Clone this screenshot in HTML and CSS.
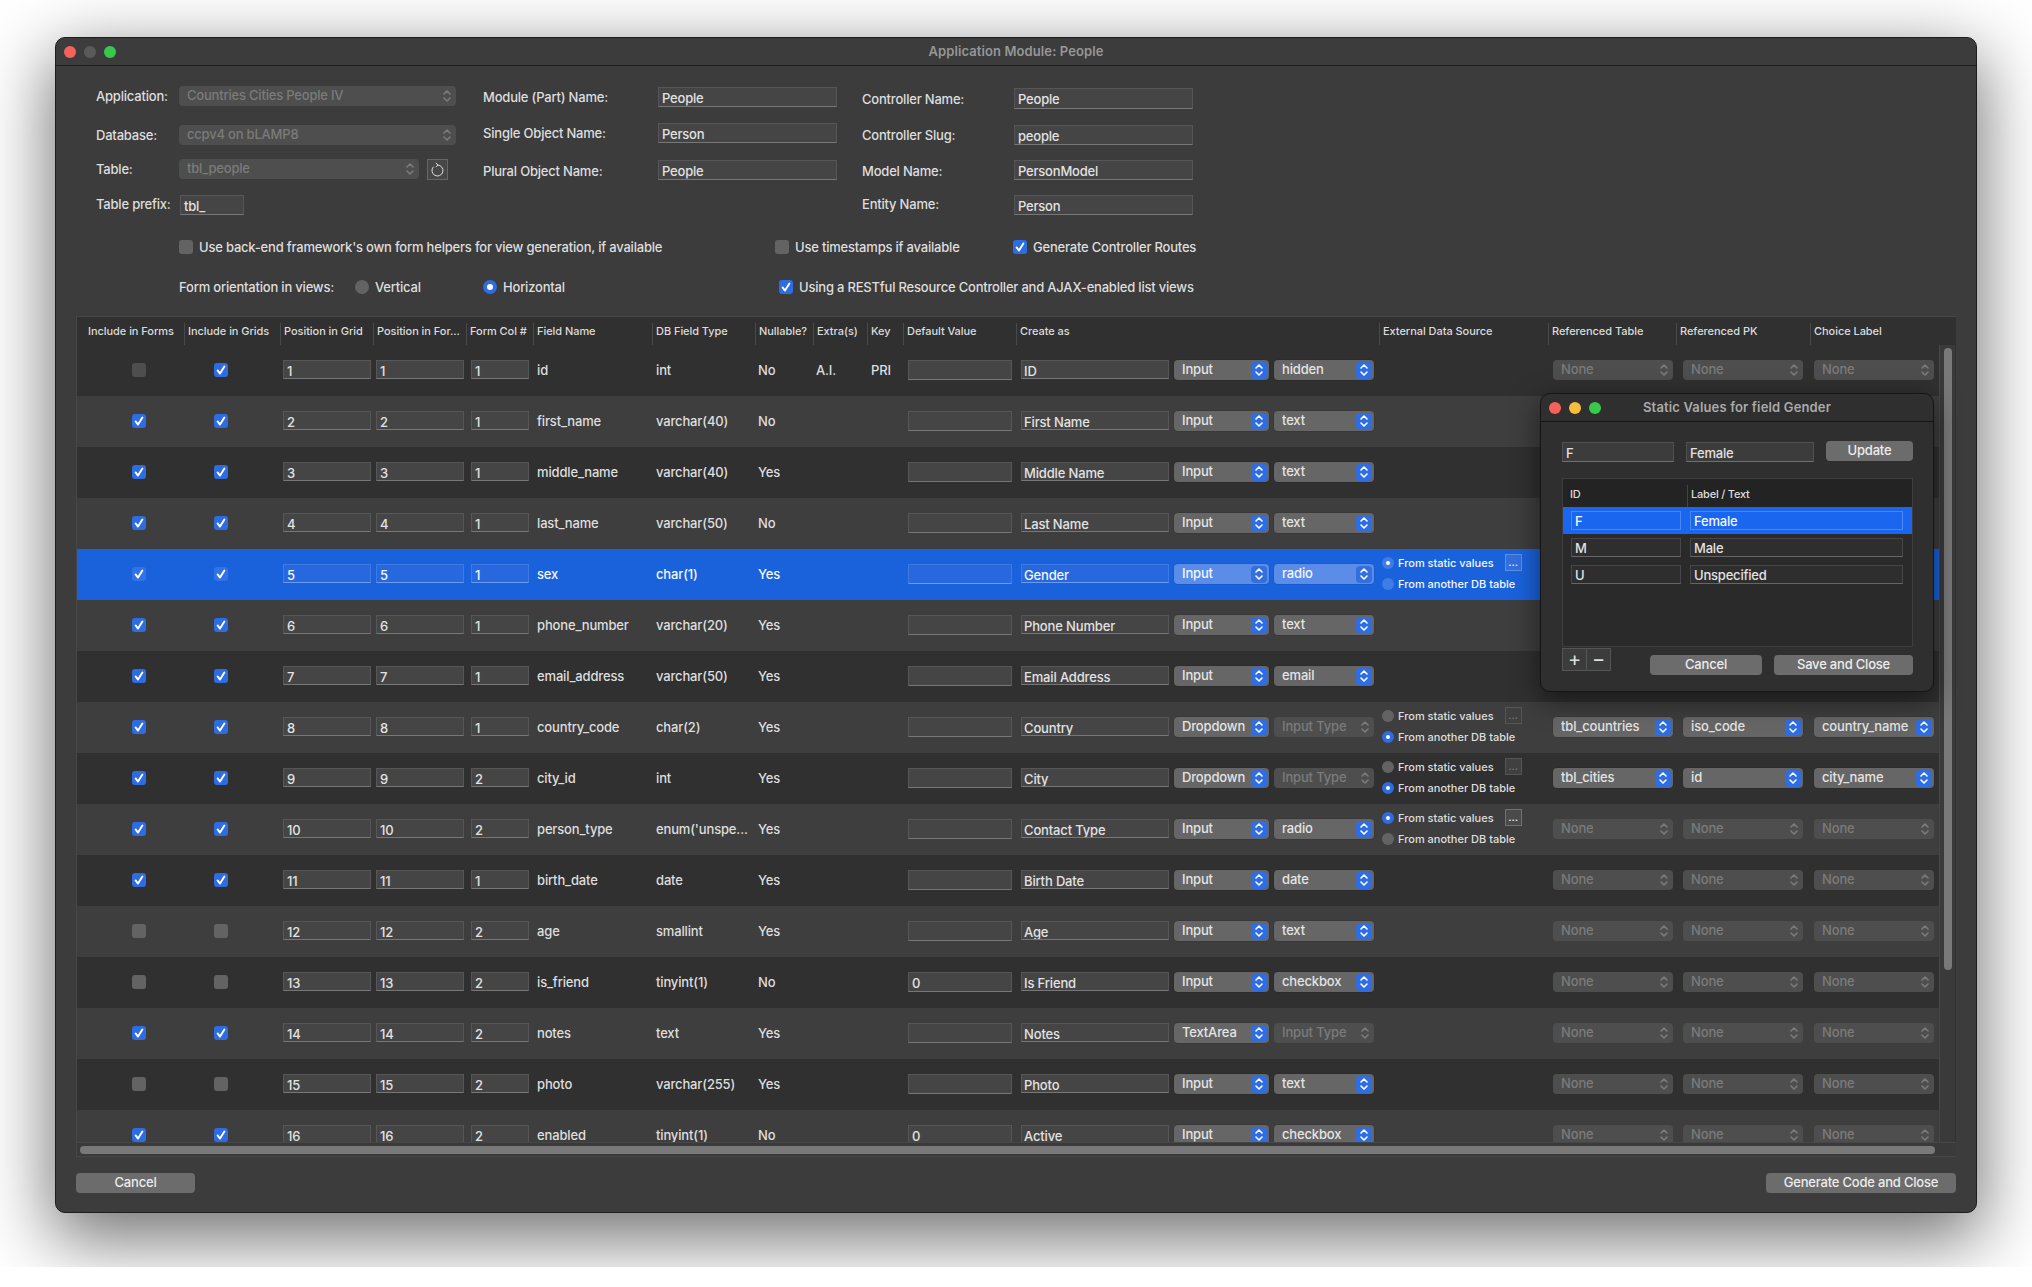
FILE: index.html
```html
<!DOCTYPE html>
<html lang="en">
<head>
  <meta charset="UTF-8" />
  <title>Application Module: People</title>
  <link rel="stylesheet" href="styles.css">
</head>
<body>
  <svg class="defs" width="0" height="0">
    <symbol id="ud" viewBox="0 0 10 16"><path d="M2 6 L5 3 L8 6 M2 10 L5 13 L8 10" fill="none" stroke="currentColor" stroke-width="1.6" stroke-linecap="round" stroke-linejoin="round"/></symbol>
    <symbol id="tick" viewBox="0 0 14 14"><path d="M3.6 7.4 L6 10.6 L10.4 3.6" fill="none" stroke="#fff" stroke-width="1.9" stroke-linecap="round" stroke-linejoin="round"/></symbol>
  </svg>

  <div class="desk">
  <div class="window">
    <div class="titlebar">
      <span class="lights"><i class="red"></i><i class="off"></i><i class="green"></i></span>
      Application Module: People
    </div>

    <div class="content">
      <div class="form-head">
        <div class="col col-app">
          <div class="fld"><label>Application:</label><div class="sel dis wide"><span>Countries Cities People IV</span><svg class="ud"><use href="#ud"/></svg></div></div>
          <div class="fld"><label>Database:</label><div class="sel dis wide"><span>ccpv4 on bLAMP8</span><svg class="ud"><use href="#ud"/></svg></div></div>
          <div class="fld"><label>Table:</label><div class="sel dis table-sel"><span>tbl_people</span><svg class="ud"><use href="#ud"/></svg></div>
            <div class="refresh"><svg width="13" height="15" viewBox="0 0 13 15"><path d="M6.5 3 A5.5 5.5 0 1 1 2.4 4.8" fill="none" stroke="#ddd" stroke-width="1"/><path d="M4.8 0.8 L7 3 L4.8 5" fill="none" stroke="#ddd" stroke-width="1"/></svg></div>
          </div>
          <div class="fld"><label>Table prefix:</label><div class="input prefix">tbl_</div></div>
        </div>
        <div class="col col-mod">
          <div class="fld"><label>Module (Part) Name:</label><div class="input">People</div></div>
          <div class="fld"><label>Single Object Name:</label><div class="input">Person</div></div>
          <div class="fld"><label>Plural Object Name:</label><div class="input">People</div></div>
        </div>
        <div class="col col-ctl">
          <div class="fld"><label>Controller Name:</label><div class="input">People</div></div>
          <div class="fld"><label>Controller Slug:</label><div class="input">people</div></div>
          <div class="fld"><label>Model Name:</label><div class="input">PersonModel</div></div>
          <div class="fld"><label>Entity Name:</label><div class="input">Person</div></div>
        </div>
      </div>

      <div class="opts opts-a">
        <div class="opt"><b class="cb"></b>Use back-end framework's own form helpers for view generation, if available</div>
        <div class="opt"><b class="cb"></b>Use timestamps if available</div>
        <div class="opt"><b class="cb on"><svg><use href="#tick"/></svg></b>Generate Controller Routes</div>
      </div>
      <div class="opts opts-b">
        <div class="opt">Form orientation in views:</div>
        <div class="opt"><b class="rd"></b>Vertical</div>
        <div class="opt"><b class="rd on"></b>Horizontal</div>
        <div class="opt"><b class="cb on"><svg><use href="#tick"/></svg></b>Using a RESTful Resource Controller and AJAX-enabled list views</div>
      </div>

      <div class="grid">
        <div class="thead">
          <div>Include in Forms</div><div>Include in Grids</div><div>Position in Grid</div><div>Position in For...</div><div>Form Col #</div><div>Field Name</div><div>DB Field Type</div><div>Nullable?</div><div>Extra(s)</div><div>Key</div><div>Default Value</div><div>Create as</div><div>External Data Source</div><div>Referenced Table</div><div>Referenced PK</div><div>Choice Label</div>
        </div>
        <div class="tbody">
          <div class="rows">

            <div class="row">
              <div><b class="cb dim"></b></div><div><b class="cb on"><svg><use href="#tick"/></svg></b></div>
              <div><div class="input">1</div></div><div><div class="input">1</div></div><div><div class="input">1</div></div>
              <div>id</div><div>int</div><div>No</div><div>A.I.</div><div>PRI</div>
              <div><div class="input"></div></div>
              <div class="create"><div class="input">ID</div><div class="sel"><span>Input</span><i><svg class="ud"><use href="#ud"/></svg></i></div><div class="sel"><span>hidden</span><i><svg class="ud"><use href="#ud"/></svg></i></div></div>
              <div></div>
              <div><div class="sel dis"><span>None</span><svg class="ud"><use href="#ud"/></svg></div></div><div><div class="sel dis"><span>None</span><svg class="ud"><use href="#ud"/></svg></div></div><div><div class="sel dis"><span>None</span><svg class="ud"><use href="#ud"/></svg></div></div>
            </div>

            <div class="row">
              <div><b class="cb on"><svg><use href="#tick"/></svg></b></div><div><b class="cb on"><svg><use href="#tick"/></svg></b></div>
              <div><div class="input">2</div></div><div><div class="input">2</div></div><div><div class="input">1</div></div>
              <div>first_name</div><div>varchar(40)</div><div>No</div><div></div><div></div>
              <div><div class="input"></div></div>
              <div class="create"><div class="input">First Name</div><div class="sel"><span>Input</span><i><svg class="ud"><use href="#ud"/></svg></i></div><div class="sel"><span>text</span><i><svg class="ud"><use href="#ud"/></svg></i></div></div>
              <div></div><div></div><div></div><div></div>
            </div>

            <div class="row">
              <div><b class="cb on"><svg><use href="#tick"/></svg></b></div><div><b class="cb on"><svg><use href="#tick"/></svg></b></div>
              <div><div class="input">3</div></div><div><div class="input">3</div></div><div><div class="input">1</div></div>
              <div>middle_name</div><div>varchar(40)</div><div>Yes</div><div></div><div></div>
              <div><div class="input"></div></div>
              <div class="create"><div class="input">Middle Name</div><div class="sel"><span>Input</span><i><svg class="ud"><use href="#ud"/></svg></i></div><div class="sel"><span>text</span><i><svg class="ud"><use href="#ud"/></svg></i></div></div>
              <div></div><div></div><div></div><div></div>
            </div>

            <div class="row">
              <div><b class="cb on"><svg><use href="#tick"/></svg></b></div><div><b class="cb on"><svg><use href="#tick"/></svg></b></div>
              <div><div class="input">4</div></div><div><div class="input">4</div></div><div><div class="input">1</div></div>
              <div>last_name</div><div>varchar(50)</div><div>No</div><div></div><div></div>
              <div><div class="input"></div></div>
              <div class="create"><div class="input">Last Name</div><div class="sel"><span>Input</span><i><svg class="ud"><use href="#ud"/></svg></i></div><div class="sel"><span>text</span><i><svg class="ud"><use href="#ud"/></svg></i></div></div>
              <div></div><div></div><div></div><div></div>
            </div>

            <div class="row selected">
              <div><b class="cb on"><svg><use href="#tick"/></svg></b></div><div><b class="cb on"><svg><use href="#tick"/></svg></b></div>
              <div><div class="input">5</div></div><div><div class="input">5</div></div><div><div class="input">1</div></div>
              <div>sex</div><div>char(1)</div><div>Yes</div><div></div><div></div>
              <div><div class="input"></div></div>
              <div class="create"><div class="input">Gender</div><div class="sel"><span>Input</span><i><svg class="ud"><use href="#ud"/></svg></i></div><div class="sel"><span>radio</span><i><svg class="ud"><use href="#ud"/></svg></i></div></div>
              <div class="source"><div class="src-line"><b class="rd small on"></b>From static values<u class="dots">...</u></div><div class="src-line"><b class="rd small"></b>From another DB table</div></div>
              <div></div><div></div><div></div>
            </div>

            <div class="row">
              <div><b class="cb on"><svg><use href="#tick"/></svg></b></div><div><b class="cb on"><svg><use href="#tick"/></svg></b></div>
              <div><div class="input">6</div></div><div><div class="input">6</div></div><div><div class="input">1</div></div>
              <div>phone_number</div><div>varchar(20)</div><div>Yes</div><div></div><div></div>
              <div><div class="input"></div></div>
              <div class="create"><div class="input">Phone Number</div><div class="sel"><span>Input</span><i><svg class="ud"><use href="#ud"/></svg></i></div><div class="sel"><span>text</span><i><svg class="ud"><use href="#ud"/></svg></i></div></div>
              <div></div><div></div><div></div><div></div>
            </div>

            <div class="row">
              <div><b class="cb on"><svg><use href="#tick"/></svg></b></div><div><b class="cb on"><svg><use href="#tick"/></svg></b></div>
              <div><div class="input">7</div></div><div><div class="input">7</div></div><div><div class="input">1</div></div>
              <div>email_address</div><div>varchar(50)</div><div>Yes</div><div></div><div></div>
              <div><div class="input"></div></div>
              <div class="create"><div class="input">Email Address</div><div class="sel"><span>Input</span><i><svg class="ud"><use href="#ud"/></svg></i></div><div class="sel"><span>email</span><i><svg class="ud"><use href="#ud"/></svg></i></div></div>
              <div></div><div></div><div></div><div></div>
            </div>

            <div class="row">
              <div><b class="cb on"><svg><use href="#tick"/></svg></b></div><div><b class="cb on"><svg><use href="#tick"/></svg></b></div>
              <div><div class="input">8</div></div><div><div class="input">8</div></div><div><div class="input">1</div></div>
              <div>country_code</div><div>char(2)</div><div>Yes</div><div></div><div></div>
              <div><div class="input"></div></div>
              <div class="create"><div class="input">Country</div><div class="sel"><span>Dropdown</span><i><svg class="ud"><use href="#ud"/></svg></i></div><div class="sel dis"><span>Input Type</span><svg class="ud"><use href="#ud"/></svg></div></div>
              <div class="source"><div class="src-line"><b class="rd small"></b>From static values<u class="dots dim">...</u></div><div class="src-line"><b class="rd small on"></b>From another DB table</div></div>
              <div><div class="sel ref"><span>tbl_countries</span><i><svg class="ud"><use href="#ud"/></svg></i></div></div><div><div class="sel ref"><span>iso_code</span><i><svg class="ud"><use href="#ud"/></svg></i></div></div><div><div class="sel ref"><span>country_name</span><i><svg class="ud"><use href="#ud"/></svg></i></div></div>
            </div>

            <div class="row">
              <div><b class="cb on"><svg><use href="#tick"/></svg></b></div><div><b class="cb on"><svg><use href="#tick"/></svg></b></div>
              <div><div class="input">9</div></div><div><div class="input">9</div></div><div><div class="input">2</div></div>
              <div>city_id</div><div>int</div><div>Yes</div><div></div><div></div>
              <div><div class="input"></div></div>
              <div class="create"><div class="input">City</div><div class="sel"><span>Dropdown</span><i><svg class="ud"><use href="#ud"/></svg></i></div><div class="sel dis"><span>Input Type</span><svg class="ud"><use href="#ud"/></svg></div></div>
              <div class="source"><div class="src-line"><b class="rd small"></b>From static values<u class="dots dim">...</u></div><div class="src-line"><b class="rd small on"></b>From another DB table</div></div>
              <div><div class="sel ref"><span>tbl_cities</span><i><svg class="ud"><use href="#ud"/></svg></i></div></div><div><div class="sel ref"><span>id</span><i><svg class="ud"><use href="#ud"/></svg></i></div></div><div><div class="sel ref"><span>city_name</span><i><svg class="ud"><use href="#ud"/></svg></i></div></div>
            </div>

            <div class="row">
              <div><b class="cb on"><svg><use href="#tick"/></svg></b></div><div><b class="cb on"><svg><use href="#tick"/></svg></b></div>
              <div><div class="input">10</div></div><div><div class="input">10</div></div><div><div class="input">2</div></div>
              <div>person_type</div><div>enum('unspe...</div><div>Yes</div><div></div><div></div>
              <div><div class="input"></div></div>
              <div class="create"><div class="input">Contact Type</div><div class="sel"><span>Input</span><i><svg class="ud"><use href="#ud"/></svg></i></div><div class="sel"><span>radio</span><i><svg class="ud"><use href="#ud"/></svg></i></div></div>
              <div class="source"><div class="src-line"><b class="rd small on"></b>From static values<u class="dots">...</u></div><div class="src-line"><b class="rd small"></b>From another DB table</div></div>
              <div><div class="sel dis ref"><span>None</span><svg class="ud"><use href="#ud"/></svg></div></div><div><div class="sel dis ref"><span>None</span><svg class="ud"><use href="#ud"/></svg></div></div><div><div class="sel dis ref"><span>None</span><svg class="ud"><use href="#ud"/></svg></div></div>
            </div>

            <div class="row">
              <div><b class="cb on"><svg><use href="#tick"/></svg></b></div><div><b class="cb on"><svg><use href="#tick"/></svg></b></div>
              <div><div class="input">11</div></div><div><div class="input">11</div></div><div><div class="input">1</div></div>
              <div>birth_date</div><div>date</div><div>Yes</div><div></div><div></div>
              <div><div class="input"></div></div>
              <div class="create"><div class="input">Birth Date</div><div class="sel"><span>Input</span><i><svg class="ud"><use href="#ud"/></svg></i></div><div class="sel"><span>date</span><i><svg class="ud"><use href="#ud"/></svg></i></div></div>
              <div></div>
              <div><div class="sel dis ref"><span>None</span><svg class="ud"><use href="#ud"/></svg></div></div><div><div class="sel dis ref"><span>None</span><svg class="ud"><use href="#ud"/></svg></div></div><div><div class="sel dis ref"><span>None</span><svg class="ud"><use href="#ud"/></svg></div></div>
            </div>

            <div class="row">
              <div><b class="cb"></b></div><div><b class="cb"></b></div>
              <div><div class="input">12</div></div><div><div class="input">12</div></div><div><div class="input">2</div></div>
              <div>age</div><div>smallint</div><div>Yes</div><div></div><div></div>
              <div><div class="input"></div></div>
              <div class="create"><div class="input">Age</div><div class="sel"><span>Input</span><i><svg class="ud"><use href="#ud"/></svg></i></div><div class="sel"><span>text</span><i><svg class="ud"><use href="#ud"/></svg></i></div></div>
              <div></div>
              <div><div class="sel dis ref"><span>None</span><svg class="ud"><use href="#ud"/></svg></div></div><div><div class="sel dis ref"><span>None</span><svg class="ud"><use href="#ud"/></svg></div></div><div><div class="sel dis ref"><span>None</span><svg class="ud"><use href="#ud"/></svg></div></div>
            </div>

            <div class="row">
              <div><b class="cb"></b></div><div><b class="cb"></b></div>
              <div><div class="input">13</div></div><div><div class="input">13</div></div><div><div class="input">2</div></div>
              <div>is_friend</div><div>tinyint(1)</div><div>No</div><div></div><div></div>
              <div><div class="input">0</div></div>
              <div class="create"><div class="input">Is Friend</div><div class="sel"><span>Input</span><i><svg class="ud"><use href="#ud"/></svg></i></div><div class="sel"><span>checkbox</span><i><svg class="ud"><use href="#ud"/></svg></i></div></div>
              <div></div>
              <div><div class="sel dis ref"><span>None</span><svg class="ud"><use href="#ud"/></svg></div></div><div><div class="sel dis ref"><span>None</span><svg class="ud"><use href="#ud"/></svg></div></div><div><div class="sel dis ref"><span>None</span><svg class="ud"><use href="#ud"/></svg></div></div>
            </div>

            <div class="row">
              <div><b class="cb on"><svg><use href="#tick"/></svg></b></div><div><b class="cb on"><svg><use href="#tick"/></svg></b></div>
              <div><div class="input">14</div></div><div><div class="input">14</div></div><div><div class="input">2</div></div>
              <div>notes</div><div>text</div><div>Yes</div><div></div><div></div>
              <div><div class="input"></div></div>
              <div class="create"><div class="input">Notes</div><div class="sel"><span>TextArea</span><i><svg class="ud"><use href="#ud"/></svg></i></div><div class="sel dis"><span>Input Type</span><svg class="ud"><use href="#ud"/></svg></div></div>
              <div></div>
              <div><div class="sel dis ref"><span>None</span><svg class="ud"><use href="#ud"/></svg></div></div><div><div class="sel dis ref"><span>None</span><svg class="ud"><use href="#ud"/></svg></div></div><div><div class="sel dis ref"><span>None</span><svg class="ud"><use href="#ud"/></svg></div></div>
            </div>

            <div class="row">
              <div><b class="cb"></b></div><div><b class="cb"></b></div>
              <div><div class="input">15</div></div><div><div class="input">15</div></div><div><div class="input">2</div></div>
              <div>photo</div><div>varchar(255)</div><div>Yes</div><div></div><div></div>
              <div><div class="input"></div></div>
              <div class="create"><div class="input">Photo</div><div class="sel"><span>Input</span><i><svg class="ud"><use href="#ud"/></svg></i></div><div class="sel"><span>text</span><i><svg class="ud"><use href="#ud"/></svg></i></div></div>
              <div></div>
              <div><div class="sel dis ref"><span>None</span><svg class="ud"><use href="#ud"/></svg></div></div><div><div class="sel dis ref"><span>None</span><svg class="ud"><use href="#ud"/></svg></div></div><div><div class="sel dis ref"><span>None</span><svg class="ud"><use href="#ud"/></svg></div></div>
            </div>

            <div class="row">
              <div><b class="cb on"><svg><use href="#tick"/></svg></b></div><div><b class="cb on"><svg><use href="#tick"/></svg></b></div>
              <div><div class="input">16</div></div><div><div class="input">16</div></div><div><div class="input">2</div></div>
              <div>enabled</div><div>tinyint(1)</div><div>No</div><div></div><div></div>
              <div><div class="input">0</div></div>
              <div class="create"><div class="input">Active</div><div class="sel"><span>Input</span><i><svg class="ud"><use href="#ud"/></svg></i></div><div class="sel"><span>checkbox</span><i><svg class="ud"><use href="#ud"/></svg></i></div></div>
              <div></div>
              <div><div class="sel dis ref"><span>None</span><svg class="ud"><use href="#ud"/></svg></div></div><div><div class="sel dis ref"><span>None</span><svg class="ud"><use href="#ud"/></svg></div></div><div><div class="sel dis ref"><span>None</span><svg class="ud"><use href="#ud"/></svg></div></div>
            </div>

          </div>
          <div class="vscroll"><div class="thumb"></div></div>
        </div>
        <div class="hscroll"><div class="thumb"></div></div>
      </div>

      <div class="footer">
        <div class="btn cancel">Cancel</div>
        <div class="btn generate">Generate Code and Close</div>
      </div>
    </div>

    <!-- floating sheet over the grid -->
    <div class="dialog">
      <div class="titlebar dlg-title">
        <span class="lights"><i class="red"></i><i class="yellow"></i><i class="green"></i></span>
        Static Values for field Gender
      </div>
      <div class="dlg-body">
        <div class="dlg-top">
          <div class="input key">F</div>
          <div class="input val">Female</div>
          <div class="btn update">Update</div>
        </div>
        <div class="values">
          <div class="values-head"><div>ID</div><div>Label / Text</div></div>
          <div class="values-row selected"><div class="input">F</div><div class="input">Female</div></div>
          <div class="values-row"><div class="input">M</div><div class="input">Male</div></div>
          <div class="values-row"><div class="input">U</div><div class="input">Unspecified</div></div>
        </div>
        <div class="dlg-foot">
          <div class="plusminus"><span>+</span><span>&minus;</span></div>
          <div class="btn dlg-cancel">Cancel</div>
          <div class="btn save">Save and Close</div>
        </div>
      </div>
    </div>
  </div>
  </div>
</body>
</html>
```

FILE: styles.css
```css
* { box-sizing: border-box; }

body {
  margin: 0;
  background: #fff;
  font-family: "Inter", "Liberation Sans", sans-serif;
  font-size: 13px;
  font-weight: 500;
  letter-spacing: -0.2px;
  color: #dedede;
}

.defs { position: absolute; }

/* the screenshot crops the window shadow just under the window */
.desk { height: 1267px; padding: 37px 0 0 55px; overflow: hidden; }

.window {
  position: relative;
  width: 1922px;
  height: 1176px;
  background: #3c3c3c;
  border: 1px solid #1d1d1d;
  border-radius: 10px;
  box-shadow: 0 22px 70px 4px rgba(0, 0, 0, 0.56);
}

.titlebar {
  position: relative;
  height: 28px;
  line-height: 26px;
  text-align: center;
  font-weight: 600;
  font-size: 13px;
  letter-spacing: 0.1px;
  color: #979797;
  border-bottom: 1px solid #1e1e1e;
  border-radius: 9px 9px 0 0;
}

.lights {
  position: absolute;
  left: 8px;
  top: 8px;
  display: flex;
  gap: 8px;
}
.lights i { width: 12px; height: 12px; border-radius: 50%; }
.lights .red { background: #f6615b; }
.lights .off { background: #5a5a5a; }
.lights .yellow { background: #f6bd3b; }
.lights .green { background: #39c94a; }

.content { padding: 0 20px; }

/* top form */
.form-head { display: flex; height: 149px; }
.col { display: flex; flex-direction: column; }
.col-app { margin: 20px 0 0 20px; width: 387px; }
.col-mod { margin-top: 21px; width: 379px; }
.col-ctl { margin-top: 22px; }

.fld { display: flex; align-items: center; height: 20px; }
.fld label { flex: none; }
.col-app label { width: 83px; margin-bottom: 1px; }
.col-mod label { width: 175px; }
.col-ctl label { width: 152px; }
.col-mod .fld:nth-child(3) label,
.col-ctl .fld:nth-child(3) label { margin-top: 2px; }
.col-ctl .fld:nth-child(4) label,
.col-app .fld:nth-child(4) label { margin-bottom: 2px; }
.col-app .fld:nth-child(2) { margin-top: 19px; }
.col-app .fld:nth-child(3) { margin-top: 14px; }
.col-app .fld:nth-child(4) { margin-top: 16px; }
.col-mod .fld:nth-child(2) { margin-top: 16px; }
.col-mod .fld:nth-child(3) { margin-top: 17px; }
.col-ctl .fld:nth-child(1) { height: 21px; }
.col-ctl .fld:nth-child(2) { margin-top: 16px; }
.col-ctl .fld:nth-child(3),
.col-ctl .fld:nth-child(4) { margin-top: 15px; }
.col-ctl .fld:nth-child(1) .input { height: 21px; }

.input {
  flex: none;
  width: 179px;
  height: 20px;
  padding: 2px 3px 0;
  line-height: 17px;
  background: #454545;
  border: 1px solid #565656;
  border-bottom-color: #777;
  white-space: nowrap;
  overflow: hidden;
  color: #e2e2e2;
}
.prefix { width: 64px; margin-left: 1px; }

.sel {
  display: flex;
  align-items: center;
  height: 20px;
  padding-left: 8px;
  border-radius: 4px;
  background: #666;
  color: #e4e4e4;
  box-shadow: 0 0 0 0.5px rgba(0, 0, 0, 0.15);
}
.sel span { flex: 1; padding-bottom: 2px; white-space: nowrap; overflow: hidden; }
.sel i {
  display: flex;
  align-items: center;
  justify-content: center;
  flex: none;
  width: 16px;
  height: 17px;
  margin-right: 2px;
  border-radius: 4px;
  background: #2f6de2;
  color: #fff;
}
.ud { display: block; width: 10px; height: 16px; }
.sel.dis { background: #4e4e4e; color: #7b7b7b; box-shadow: none; padding-right: 4px; }
.sel.wide { width: 277px; }
.sel.table-sel { width: 240px; }

.refresh {
  display: flex;
  align-items: center;
  justify-content: center;
  width: 21px;
  height: 21px;
  margin-left: 8px;
  background: #474747;
  border: 1px solid #666;
}

.cb {
  display: inline-block;
  flex: none;
  width: 14px;
  height: 14px;
  border-radius: 3px;
  background: #636363;
  vertical-align: top;
}
.cb.dim { background: #4e4e4e; }
.cb.on { background: #2d6ce3; }
.cb svg { display: block; width: 14px; height: 14px; }

.rd {
  display: inline-block;
  flex: none;
  width: 14px;
  height: 14px;
  border-radius: 50%;
  background: #636363;
}
.rd.on { background: #fff; border: 4.5px solid #2d6ce3; }
.rd.small { width: 12px; height: 12px; }
.rd.small.on { border-width: 4px; }

.opts { display: flex; align-items: center; height: 14px; margin-left: 103px; }
.opts-a { margin-top: 25px; }
.opts-b { margin-top: 26px; }
.opt { display: flex; align-items: center; flex: none; gap: 6px; white-space: nowrap; }
.opts-a .opt:nth-child(1) { width: 596px; }
.opts-a .opt:nth-child(2) { width: 238px; }
.opts-b .opt:nth-child(1) { width: 176px; }
.opts-b .opt:nth-child(2) { width: 128px; }
.opts-b .opt:nth-child(3) { width: 296px; }

/* grid */
.grid {
  height: 841px;
  margin-top: 22px;
  background: #333;
  border: 1px solid #474747;
  border-right: 0;
  overflow: hidden;
}
.thead, .row {
  display: grid;
  grid-template-columns: 107px 96px 93px 93px 67px 119px 103px 58px 54px 36px 113px 363px 169px 128px 134px 130px;
}
.thead {
  height: 28px;
  padding-right: 16px;
  background: #303030;
  font-size: 11px;
  font-weight: 500;
  letter-spacing: -0.05px;
  color: #dcdcdc;
}
.thead > div {
  height: 22px;
  margin-top: 6px;
  padding: 1px 0 0 3px;
  border-left: 1px solid #4a4a4a;
  white-space: nowrap;
  overflow: hidden;
}
.thead > div:first-child { border-left: 0; padding-left: 11px; }

.tbody { display: flex; height: 797px; }
.rows { flex: none; width: 1862px; height: 797px; overflow: hidden; }
.row { height: 51px; background: #303030; letter-spacing: -0.15px; }
.row:nth-child(even) { background: #3e3e3e; }
.row > div { padding-top: 15px; line-height: 20px; white-space: nowrap; }
.row > div:nth-child(1) { padding-left: 55px; padding-top: 18px; }
.row > div:nth-child(2) { padding-left: 30px; padding-top: 18px; }
.row > div:nth-child(3), .row > div:nth-child(4) { padding-left: 3px; }
.row > div:nth-child(5) { padding-left: 5px; }
.row > div:nth-child(6) { padding-left: 4px; }
.row > div:nth-child(7) { padding-left: 4px; }
.row > div:nth-child(8) { padding-left: 3px; }
.row > div:nth-child(9) { padding-left: 3px; }
.row > div:nth-child(10) { padding-left: 4px; }
.row > div:nth-child(11) { padding-left: 5px; }
.row > div:nth-child(14) { padding-left: 5px; }
.row > div:nth-child(15) { padding-left: 7px; }
.row > div:nth-child(16) { padding-left: 4px; }

.row .input { width: 100%; height: 19px; }
.row > div:nth-child(3) .input, .row > div:nth-child(4) .input { width: 88px; }
.row > div:nth-child(5) .input { width: 58px; }
.row > div:nth-child(11) .input { width: 104px; height: 20px; }

.create { display: flex; gap: 5px; padding-left: 5px; }
.create .input { width: 148px; padding-left: 2px; }
.create .sel { width: 95px; }
.create .sel:last-child { width: 100px; }
.row .sel.dis { width: 100px; }
.row > div:nth-child(n+14) .sel { width: 120px; }

.row > .source { padding: 3px 0 0 3px; font-size: 11px; letter-spacing: 0; }
.src-line { display: flex; align-items: center; gap: 4px; height: 21px; }
.dots {
  display: block;
  width: 17px;
  height: 17px;
  margin-left: 7px;
  text-align: center;
  line-height: 15px;
  text-decoration: none;
  background: #4a4a4a;
  border: 1px solid #717171;
  color: #eee;
}
.dots.dim { background: #404040; border-color: #555; color: #777; }

/* selected row */
.row.selected { background: #1a62dc; color: #f2f6ff; }
.selected .input { background: #2868de; border-color: #3e7ae4; border-bottom-color: #6b9bef; color: #f2f6ff; }
.selected .cb.on { background: #3371e6; }
.selected .sel { background: #5b8de8; color: #f2f6ff; }
.selected .sel i { background: #336fdd; }
.selected .rd { background: #3f7de6; }
.selected .rd.on { background: #fff; border-color: #3f7de6; }
.selected .dots { background: #336fdd; border-color: #5c8fe8; }

.vscroll { flex: none; width: 16px; padding: 3px 4px; background: #3a3a3a; border-left: 1px solid #474747; }
.vscroll .thumb { width: 8px; height: 622px; border-radius: 4px; background: #797979; }
.hscroll { height: 14px; padding: 3px; background: #3a3a3a; border-top: 1px solid #474747; }
.hscroll .thumb { width: 1855px; height: 8px; border-radius: 4px; background: #797979; }

.btn {
  height: 20px;
  line-height: 19px;
  text-align: center;
  border-radius: 4px;
  background: #6c6c6c;
  color: #ececec;
}
.footer { display: flex; justify-content: space-between; margin-top: 16px; }
.cancel { width: 119px; }
.generate { width: 190px; }

/* static values sheet */
.dialog {
  position: absolute;
  left: 1484px;
  top: 355px;
  width: 394px;
  height: 299px;
  background: #2f2f2f;
  border: 1px solid #151515;
  border-radius: 10px;
  box-shadow: 0 8px 28px rgba(0, 0, 0, 0.5);
}
.dlg-title { color: #aaa; border-bottom-color: #141414; letter-spacing: 0.15px; }
.dlg-title .lights { left: 8px; top: 8px; }
.dlg-body { padding: 20px 20px 0 21px; }
.dlg-top { display: flex; gap: 12px; }
.dlg-top .input { background: #3c3c3c; border-color: #505050; border-bottom-color: #707070; }
.key { width: 112px; }
.val { width: 128px; }
.update { width: 87px; margin-top: -1px; }

.values { height: 169px; margin-top: 16px; background: #2a2a2a; border: 1px solid #3e3e3e; }
.values-head {
  display: grid;
  grid-template-columns: 124px 1fr;
  height: 28px;
  background: #232323;
  font-size: 11px;
  font-weight: 500;
}
.values-head div { height: 22px; margin-top: 6px; padding: 2px 0 0 3px; border-left: 1px solid #444; }
.values-head div:first-child { border-left: 0; padding-left: 7px; }
.values-row { display: flex; gap: 9px; height: 27px; padding: 4px 9px 0 8px; }
.values-row .input { height: 19px; padding-top: 1px; background: #2e2e2e; border-color: #474747; border-bottom-color: #666; }
.values-row .input:first-child { width: 110px; }
.values-row .input:last-child { width: 213px; }
.values-row.selected { background: #1a66ee; }
.values-row.selected .input { background: #1a66ee; border-color: #4c88f2; color: #f2f6ff; }

.dlg-foot { display: flex; align-items: flex-start; margin-top: 1px; }
.plusminus { display: flex; width: 49px; height: 23px; margin-right: 39px; }
.plusminus span {
  flex: 1;
  text-align: center;
  line-height: 20px;
  font-size: 20px;
  font-weight: 400;
  background: #3c3c3c;
  border: 1px solid #555;
}
.plusminus span + span { border-left: 0; }
.dlg-cancel { width: 112px; margin-top: 7px; }
.save { width: 139px; margin-top: 7px; margin-left: 12px; }
```
